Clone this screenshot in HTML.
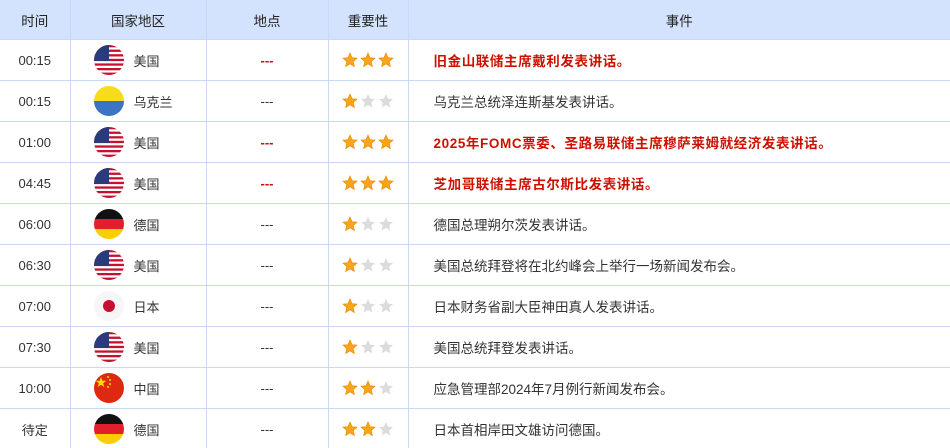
<!DOCTYPE html>
<html><head><meta charset="utf-8">
<style>
html,body{margin:0;padding:0;background:#fff;width:950px;height:448px;overflow:hidden}
table{border-collapse:collapse;table-layout:fixed;width:950px;font-family:"Liberation Sans","Noto Sans CJK SC",sans-serif;font-size:13px;color:#333}
td,th{border:1px solid #c9d9f5;padding:0;height:40px;text-align:center;white-space:nowrap}
tr td:last-child,tr th:last-child{border-right:none}
tr:first-child th{border-top:none}
td:first-child,th:first-child{border-left:none}
th{background:#d3e3fd;font-weight:normal;color:#222;height:39px;font-size:13.5px}
.c{display:flex;align-items:center;padding-left:23px}
.c svg{width:30px;height:30px;margin-right:10px}
.ev{text-align:left;padding-left:25px;font-size:13.5px;letter-spacing:0}
.red{color:#cc1100;font-weight:bold;letter-spacing:0.6px}
.st svg{width:16px;height:16px;margin:0 1px;vertical-align:middle}
.rd{color:#cc1100;font-weight:bold}
</style></head><body>
<svg width="0" height="0" style="position:absolute">
<defs>
<clipPath id="cc"><circle cx="15" cy="15" r="15"/></clipPath>
<symbol id="us" viewBox="0 0 30 30"><g clip-path="url(#cc)"><rect width="30" height="30" fill="#fff"/>
<g fill="#c8102e"><rect y="0" width="30" height="2.3"/><rect y="4.6" width="30" height="2.3"/><rect y="9.2" width="30" height="2.3"/><rect y="13.8" width="30" height="2.3"/><rect y="18.4" width="30" height="2.3"/><rect y="23" width="30" height="2.3"/><rect y="27.6" width="30" height="2.4"/></g>
<rect width="15" height="16" fill="#2a3a7a"/></g></symbol>
<symbol id="ua" viewBox="0 0 30 30"><g clip-path="url(#cc)"><rect width="30" height="15" fill="#f8dc1c"/><rect y="15" width="30" height="15" fill="#3b73c6"/></g></symbol>
<symbol id="de" viewBox="0 0 30 30"><g clip-path="url(#cc)"><rect width="30" height="10" fill="#111"/><rect y="10" width="30" height="10" fill="#e3202a"/><rect y="20" width="30" height="10" fill="#fccd00"/></g></symbol>
<symbol id="jp" viewBox="0 0 30 30"><g clip-path="url(#cc)"><rect width="30" height="30" fill="#f6f6f6"/><circle cx="15" cy="15" r="6" fill="#c8102e"/></g></symbol>
<symbol id="cn" viewBox="0 0 30 30"><g clip-path="url(#cc)"><rect width="30" height="30" fill="#de2910"/><polygon points="7,4 8.3,7.8 12.3,7.8 9.1,10.2 10.3,14 7,11.7 3.7,14 4.9,10.2 1.7,7.8 5.7,7.8" fill="#ffde00"/><circle cx="14" cy="4" r="1" fill="#ffde00"/><circle cx="16" cy="7" r="1" fill="#ffde00"/><circle cx="16" cy="11" r="1" fill="#ffde00"/><circle cx="14" cy="14" r="1" fill="#ffde00"/></g></symbol>
<symbol id="so" viewBox="0 0 24 24"><polygon points="12,1.5 15,8.5 22.5,9.2 16.8,14.2 18.5,21.8 12,17.8 5.5,21.8 7.2,14.2 1.5,9.2 9,8.5" fill="#f8a51a" stroke="#e98b00" stroke-width="1"/></symbol>
<symbol id="sg" viewBox="0 0 24 24"><polygon points="12,1.5 15,8.5 22.5,9.2 16.8,14.2 18.5,21.8 12,17.8 5.5,21.8 7.2,14.2 1.5,9.2 9,8.5" fill="#dcdcdc"/></symbol>
</defs></svg>
<table>
<colgroup><col style="width:70px"><col style="width:136px"><col style="width:122px"><col style="width:80px"><col></colgroup>
<tr><th>时间</th><th>国家地区</th><th>地点</th><th>重要性</th><th>事件</th></tr>
<tr><td>00:15</td><td><div class="c"><svg><use href="#us"/></svg>美国</div></td><td class="rd">---</td><td class="st"><svg><use href="#so"/></svg><svg><use href="#so"/></svg><svg><use href="#so"/></svg></td><td class="ev red">旧金山联储主席戴利发表讲话。</td></tr>
<tr><td>00:15</td><td><div class="c"><svg><use href="#ua"/></svg>乌克兰</div></td><td>---</td><td class="st"><svg><use href="#so"/></svg><svg><use href="#sg"/></svg><svg><use href="#sg"/></svg></td><td class="ev">乌克兰总统泽连斯基发表讲话。</td></tr>
<tr><td>01:00</td><td><div class="c"><svg><use href="#us"/></svg>美国</div></td><td class="rd">---</td><td class="st"><svg><use href="#so"/></svg><svg><use href="#so"/></svg><svg><use href="#so"/></svg></td><td class="ev red">2025年FOMC票委、圣路易联储主席穆萨莱姆就经济发表讲话。</td></tr>
<tr><td>04:45</td><td><div class="c"><svg><use href="#us"/></svg>美国</div></td><td class="rd">---</td><td class="st"><svg><use href="#so"/></svg><svg><use href="#so"/></svg><svg><use href="#so"/></svg></td><td class="ev red">芝加哥联储主席古尔斯比发表讲话。</td></tr>
<tr><td>06:00</td><td><div class="c"><svg><use href="#de"/></svg>德国</div></td><td>---</td><td class="st"><svg><use href="#so"/></svg><svg><use href="#sg"/></svg><svg><use href="#sg"/></svg></td><td class="ev">德国总理朔尔茨发表讲话。</td></tr>
<tr><td>06:30</td><td><div class="c"><svg><use href="#us"/></svg>美国</div></td><td>---</td><td class="st"><svg><use href="#so"/></svg><svg><use href="#sg"/></svg><svg><use href="#sg"/></svg></td><td class="ev">美国总统拜登将在北约峰会上举行一场新闻发布会。</td></tr>
<tr><td>07:00</td><td><div class="c"><svg><use href="#jp"/></svg>日本</div></td><td>---</td><td class="st"><svg><use href="#so"/></svg><svg><use href="#sg"/></svg><svg><use href="#sg"/></svg></td><td class="ev">日本财务省副大臣神田真人发表讲话。</td></tr>
<tr><td>07:30</td><td><div class="c"><svg><use href="#us"/></svg>美国</div></td><td>---</td><td class="st"><svg><use href="#so"/></svg><svg><use href="#sg"/></svg><svg><use href="#sg"/></svg></td><td class="ev">美国总统拜登发表讲话。</td></tr>
<tr><td>10:00</td><td><div class="c"><svg><use href="#cn"/></svg>中国</div></td><td>---</td><td class="st"><svg><use href="#so"/></svg><svg><use href="#so"/></svg><svg><use href="#sg"/></svg></td><td class="ev">应急管理部2024年7月例行新闻发布会。</td></tr>
<tr><td>待定</td><td><div class="c"><svg><use href="#de"/></svg>德国</div></td><td>---</td><td class="st"><svg><use href="#so"/></svg><svg><use href="#so"/></svg><svg><use href="#sg"/></svg></td><td class="ev">日本首相岸田文雄访问德国。</td></tr>
</table>
</body></html>
